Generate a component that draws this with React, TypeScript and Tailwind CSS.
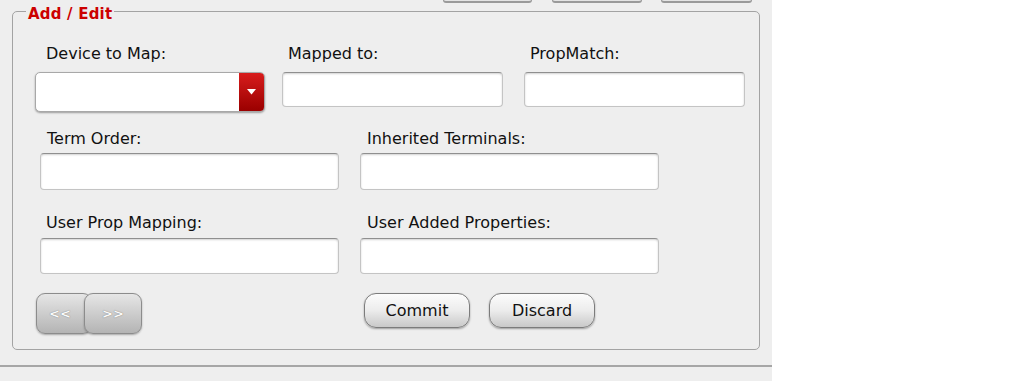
import React from "react"

const font = { fontFamily: '"DejaVu Sans", Verdana, sans-serif' }

function TextBox({ w, h }: { w: string; h: string }) {
  return (
    <div
      className={`${w} ${h} rounded-[4px] border border-[#c4c4c4] border-t-[#8f8f8f] bg-white shadow-[inset_0_1px_2px_rgba(0,0,0,0.18)]`}
    />
  )
}

function Pill({ label, w }: { label: string; w: string }) {
  return (
    <button
      className={`${w} h-[35px] rounded-[12px] border border-[#7c7c7c] bg-gradient-to-b from-[#fcfcfc] via-[#ececec] to-[#c9c9c9] text-[16px] leading-[18px] text-[#111] shadow-[0_1px_2px_rgba(0,0,0,0.35)]`}
    >
      {label}
    </button>
  )
}

export default function App() {
  return (
    <div className="flex h-[381px] w-[1013px] bg-white text-[#111]" style={font}>
      <div className="flex h-[381px] w-[772px] flex-col bg-[#eeeeee]">
        {/* bottoms of the toolbar buttons above */}
        <div className="flex h-[3px] pl-[443px]">
          <div className="h-[3px] w-[89px] rounded-b-[3px] border-x border-b-2 border-[#9a9a9a] bg-[#e4e4e4]" />
          <div className="ml-[20px] h-[3px] w-[90px] rounded-b-[3px] border-x border-b-2 border-[#9a9a9a] bg-[#e4e4e4]" />
          <div className="ml-[19px] h-[3px] w-[91px] rounded-b-[3px] border-x border-b-2 border-[#9a9a9a] bg-[#e4e4e4]" />
        </div>

        {/* Add / Edit group */}
        <div className="relative ml-[12px] mt-[8px] h-[339px] w-[748px] rounded-[5px] border border-[#a3a3a3] pl-[22px] pt-[33px]">
          <span className="absolute left-[13px] top-[-7px] bg-[#eeeeee] px-[2px] text-[15px] font-bold leading-[18px] tracking-[0.2px] text-[#cc0000]">
            Add / Edit
          </span>

          <div className="flex">
            <div className="flex w-[230px] flex-col">
              <div className="h-[27px] pl-[11px] text-[16px] leading-[18px]">Device to Map:</div>
              <div className="flex h-[40px] w-[230px] overflow-hidden rounded-[5px] border border-[#a8a8a8] bg-white shadow-[0_1px_2px_rgba(0,0,0,0.35)]">
                <div className="flex-1" />
                <div className="flex w-[25px] items-center justify-center bg-gradient-to-b from-[#d81c1c] to-[#9a0000]">
                  <svg width="9" height="6" viewBox="0 0 9 6">
                    <path d="M0 0 H9 L4.5 5.5 Z" fill="#fff" />
                  </svg>
                </div>
              </div>
            </div>
            <div className="ml-[17px] flex w-[221px] flex-col">
              <div className="h-[27px] pl-[6px] text-[16px] leading-[18px]">Mapped to:</div>
              <TextBox w="w-[221px]" h="h-[35px]" />
            </div>
            <div className="ml-[21px] flex w-[221px] flex-col">
              <div className="h-[27px] pl-[6px] text-[16px] leading-[18px]">PropMatch:</div>
              <TextBox w="w-[221px]" h="h-[35px]" />
            </div>
          </div>

          <div className="ml-[5px] mt-[18px] flex">
            <div className="flex w-[299px] flex-col">
              <div className="h-[23px] pl-[7px] text-[16px] leading-[18px]">Term Order:</div>
              <TextBox w="w-[299px]" h="h-[37px]" />
            </div>
            <div className="ml-[21px] flex w-[299px] flex-col">
              <div className="h-[23px] pl-[7px] text-[16px] leading-[18px]">Inherited Terminals:</div>
              <TextBox w="w-[299px]" h="h-[37px]" />
            </div>
          </div>

          <div className="ml-[5px] mt-[24px] flex">
            <div className="flex w-[299px] flex-col">
              <div className="h-[24px] pl-[6px] text-[16px] leading-[18px]">User Prop Mapping:</div>
              <TextBox w="w-[299px]" h="h-[36px]" />
            </div>
            <div className="ml-[21px] flex w-[299px] flex-col">
              <div className="h-[24px] pl-[7px] text-[16px] leading-[18px]">User Added Properties:</div>
              <TextBox w="w-[299px]" h="h-[36px]" />
            </div>
          </div>

          <div className="mt-[19px] flex items-start">
            <div className="ml-[1px] flex">
              <button className="h-[41px] w-[56px] rounded-[9px] border border-[#8c8c8c] bg-gradient-to-b from-[#e6e6e6] to-[#b4b4b4] pr-[8px] text-[13px] font-bold text-[#fafafa] shadow-[0_1px_2px_rgba(0,0,0,0.3)] [text-shadow:0_0_1px_#555]">
                &lt;&lt;
              </button>
              <button className="-ml-[8px] h-[41px] w-[58px] rounded-[9px] border border-[#8c8c8c] bg-gradient-to-b from-[#e6e6e6] to-[#b4b4b4] text-[13px] font-bold text-[#fafafa] shadow-[0_1px_2px_rgba(0,0,0,0.3)] [text-shadow:0_0_1px_#555]">
                &gt;&gt;
              </button>
            </div>
            <div className="ml-[222px] flex gap-[19px]">
              <Pill label="Commit" w="w-[106px]" />
              <Pill label="Discard" w="w-[106px]" />
            </div>
          </div>
        </div>

        <div className="mt-[15px] h-[2px] w-[772px] bg-[#a6a6a6]" />
      </div>
    </div>
  )
}
